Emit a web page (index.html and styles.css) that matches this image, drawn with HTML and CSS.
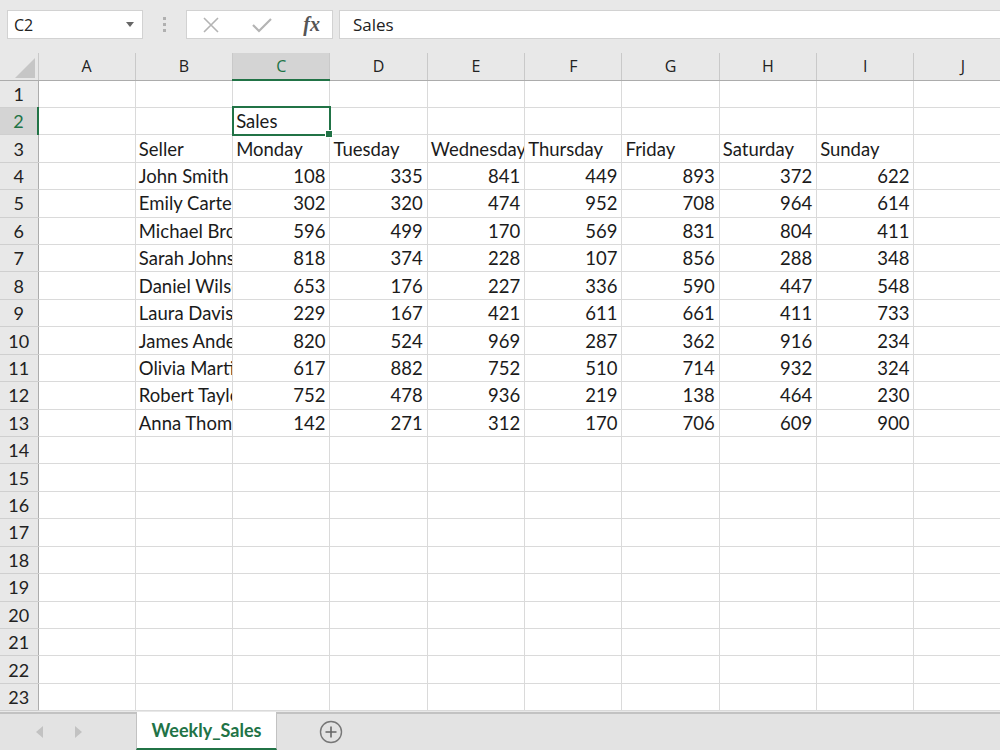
FILE: index.html
```
<!DOCTYPE html>
<html lang="en">
<head>
  <meta charset="UTF-8" />
  <title>Weekly_Sales</title>
  <link rel="stylesheet" href="styles.css">
</head>
<body>
  <div class="toolbar">
    <div class="namebox">
      <span>C2</span>
      <svg class="caret" width="8" height="5" viewBox="0 0 8 5"><path d="M0 0h8L4 5z" fill="#666"/></svg>
    </div>
    <div class="grip"><i></i><i></i><i></i></div>
    <div class="fxbox">
      <svg width="18" height="18" viewBox="0 0 18 18"><path d="M2 2l14 14M16 2L2 16" stroke="#b4b4b4" stroke-width="1.6" fill="none"/></svg>
      <svg width="22" height="18" viewBox="0 0 22 18"><path d="M2 9l6 6L20 3" stroke="#b4b4b4" stroke-width="2.2" fill="none"/></svg>
      <span class="fx">fx</span>
    </div>
    <div class="formula">Sales</div>
  </div>

  <div class="sheet">
    <table class="grid">
      <colgroup>
        <col class="c-row"><col class="c"><col class="c"><col class="c"><col class="c"><col class="c"><col class="c"><col class="c"><col class="c"><col class="c"><col class="c">
      </colgroup>
      <thead>
        <tr>
          <th class="corner"><span class="tri"></span></th>
          <th>A</th><th>B</th><th class="sel">C</th><th>D</th><th>E</th><th>F</th><th>G</th><th>H</th><th>I</th><th>J</th>
        </tr>
      </thead>
      <tbody>
        <tr><th>1</th><td></td><td></td><td></td><td></td><td></td><td></td><td></td><td></td><td></td><td></td></tr>
        <tr><th class="sel">2</th><td></td><td></td><td class="active">Sales</td><td></td><td></td><td></td><td></td><td></td><td></td><td></td></tr>
        <tr><th>3</th><td></td><td>Seller</td><td>Monday</td><td>Tuesday</td><td>Wednesday</td><td>Thursday</td><td>Friday</td><td>Saturday</td><td>Sunday</td><td></td></tr>
        <tr><th>4</th><td></td><td>John Smith</td><td class="n">108</td><td class="n">335</td><td class="n">841</td><td class="n">449</td><td class="n">893</td><td class="n">372</td><td class="n">622</td><td></td></tr>
        <tr><th>5</th><td></td><td>Emily Carter</td><td class="n">302</td><td class="n">320</td><td class="n">474</td><td class="n">952</td><td class="n">708</td><td class="n">964</td><td class="n">614</td><td></td></tr>
        <tr><th>6</th><td></td><td>Michael Brown</td><td class="n">596</td><td class="n">499</td><td class="n">170</td><td class="n">569</td><td class="n">831</td><td class="n">804</td><td class="n">411</td><td></td></tr>
        <tr><th>7</th><td></td><td>Sarah Johnson</td><td class="n">818</td><td class="n">374</td><td class="n">228</td><td class="n">107</td><td class="n">856</td><td class="n">288</td><td class="n">348</td><td></td></tr>
        <tr><th>8</th><td></td><td>Daniel Wilson</td><td class="n">653</td><td class="n">176</td><td class="n">227</td><td class="n">336</td><td class="n">590</td><td class="n">447</td><td class="n">548</td><td></td></tr>
        <tr><th>9</th><td></td><td>Laura Davis</td><td class="n">229</td><td class="n">167</td><td class="n">421</td><td class="n">611</td><td class="n">661</td><td class="n">411</td><td class="n">733</td><td></td></tr>
        <tr><th>10</th><td></td><td>James Anderson</td><td class="n">820</td><td class="n">524</td><td class="n">969</td><td class="n">287</td><td class="n">362</td><td class="n">916</td><td class="n">234</td><td></td></tr>
        <tr><th>11</th><td></td><td>Olivia Martinez</td><td class="n">617</td><td class="n">882</td><td class="n">752</td><td class="n">510</td><td class="n">714</td><td class="n">932</td><td class="n">324</td><td></td></tr>
        <tr><th>12</th><td></td><td>Robert Taylor</td><td class="n">752</td><td class="n">478</td><td class="n">936</td><td class="n">219</td><td class="n">138</td><td class="n">464</td><td class="n">230</td><td></td></tr>
        <tr><th>13</th><td></td><td>Anna Thomas</td><td class="n">142</td><td class="n">271</td><td class="n">312</td><td class="n">170</td><td class="n">706</td><td class="n">609</td><td class="n">900</td><td></td></tr>
        <tr><th>14</th><td></td><td></td><td></td><td></td><td></td><td></td><td></td><td></td><td></td><td></td></tr>
        <tr><th>15</th><td></td><td></td><td></td><td></td><td></td><td></td><td></td><td></td><td></td><td></td></tr>
        <tr><th>16</th><td></td><td></td><td></td><td></td><td></td><td></td><td></td><td></td><td></td><td></td></tr>
        <tr><th>17</th><td></td><td></td><td></td><td></td><td></td><td></td><td></td><td></td><td></td><td></td></tr>
        <tr><th>18</th><td></td><td></td><td></td><td></td><td></td><td></td><td></td><td></td><td></td><td></td></tr>
        <tr><th>19</th><td></td><td></td><td></td><td></td><td></td><td></td><td></td><td></td><td></td><td></td></tr>
        <tr><th>20</th><td></td><td></td><td></td><td></td><td></td><td></td><td></td><td></td><td></td><td></td></tr>
        <tr><th>21</th><td></td><td></td><td></td><td></td><td></td><td></td><td></td><td></td><td></td><td></td></tr>
        <tr><th>22</th><td></td><td></td><td></td><td></td><td></td><td></td><td></td><td></td><td></td><td></td></tr>
        <tr><th>23</th><td></td><td></td><td></td><td></td><td></td><td></td><td></td><td></td><td></td><td></td></tr>
      </tbody>
    </table>
  </div>

  <div class="tabbar">
    <div class="nav">
      <svg width="8" height="12" viewBox="0 0 8 12"><path d="M7 0v12L0 6z" fill="#c2c2c2"/></svg>
      <svg width="8" height="12" viewBox="0 0 8 12"><path d="M1 0v12l7-6z" fill="#c2c2c2"/></svg>
    </div>
    <div class="tab">Weekly_Sales</div>
    <div class="addsheet">
      <svg width="24" height="24" viewBox="0 0 24 24"><circle cx="12" cy="12" r="10.5" stroke="#777" stroke-width="1.4" fill="none"/><path d="M12 6.5v11M6.5 12h11" stroke="#666" stroke-width="1.6"/></svg>
    </div>
  </div>
</body>
</html>
```

FILE: styles.css
```
html, body {
  margin: 0;
  height: 750px;
  overflow: hidden;
}
body {
  display: flex;
  flex-direction: column;
  background-color: #e8e8e8;
  font-family: Lato, 'Liberation Sans', sans-serif;
  color: #1b1b1b;
}

/* formula bar */
.toolbar {
  height: 53px;
  flex: none;
  box-sizing: border-box;
  padding: 10px 0 0 7px;
  display: flex;
  align-items: flex-start;
}
.namebox, .fxbox, .formula {
  height: 29px;
  box-sizing: border-box;
  background: #fff;
  border: 1px solid #d2d2d2;
  display: flex;
  align-items: center;
}
.namebox {
  width: 136px;
  padding: 0 8px 0 6px;
  justify-content: space-between;
  font-family: 'Open Sans', sans-serif;
  font-size: 16px;
  color: #222;
}
.grip {
  width: 43px;
  height: 29px;
  display: flex;
  flex-direction: column;
  align-items: center;
  justify-content: center;
  gap: 3px;
}
.grip i {
  width: 3px;
  height: 3px;
  background: #b0b0b0;
}
.fxbox {
  width: 147px;
  padding: 0 12px 0 15px;
  justify-content: space-between;
}
.fx {
  font-family: 'Liberation Serif', serif;
  font-style: italic;
  font-weight: 700;
  font-size: 20px;
  color: #555;
}
.formula {
  flex: 1;
  margin-left: 6px;
  padding-left: 13px;
  border-right: none;
  font-family: 'Open Sans', sans-serif;
  font-size: 17px;
  color: #222;
}

/* sheet */
.sheet {
  height: 659px;
  flex: none;
  overflow: hidden;
}
.grid {
  table-layout: fixed;
  border-collapse: collapse;
  width: 1011.3px;
  background: #fff;
}
.c-row { width: 38px; }
.c { width: 97.33px; }
.grid thead th {
  height: 26px;
  padding: 0;
  background: #e8e8e8;
  border-left: 1px solid #c9c9c9;
  border-bottom: 1px solid #acacac;
  font-family: 'Open Sans', sans-serif;
  font-weight: 400;
  font-size: 16px;
  color: #222;
}
.grid thead th.corner {
  border-left: none;
  position: relative;
}
.tri {
  position: absolute;
  right: 3px;
  bottom: 2px;
  width: 0;
  height: 0;
  border-left: 20px solid transparent;
  border-bottom: 20px solid #c6c6c6;
}
.grid thead th.sel {
  background: #d4d4d4;
  color: #217346;
  border-bottom: 2px solid #217346;
}
.grid tbody tr {
  height: 27.43px;
}
.grid tbody th {
  padding: 0;
  background: #e8e8e8;
  border-bottom: 1px solid #cfcfcf;
  border-right: 1px solid #acacac;
  font-weight: 400;
  font-size: 18px;
  color: #222;
}
.grid tbody th.sel {
  background: #d4d4d4;
  color: #217346;
  border-right: 2px solid #217346;
}
.grid td {
  padding: 0 0 0 3px;
  border: 1px solid #dadada;
  white-space: nowrap;
  overflow: hidden;
  font-size: 18.5px;
}
.grid td.n {
  padding-right: 4px;
  text-align: right;
}
.grid td.active {
  position: relative;
  overflow: visible;
  outline: 2px solid #217346;
  outline-offset: -1px;
}
.grid td.active::after {
  content: '';
  position: absolute;
  right: -4px;
  bottom: -4px;
  width: 6px;
  height: 6px;
  background: #217346;
  border: 1px solid #fff;
}

/* sheet tabs */
.tabbar {
  flex: 1;
  display: flex;
  align-items: stretch;
  background: #e3e3e3;
  border-top: 2px solid #c2c2c2;
}
.nav {
  width: 136px;
  display: flex;
  align-items: center;
  gap: 30px;
  padding-left: 36px;
  box-sizing: border-box;
}
.tab {
  width: 141px;
  margin-top: -2px;
  box-sizing: border-box;
  background: #fff;
  border-left: 1px solid #c2c2c2;
  border-right: 1px solid #c2c2c2;
  border-bottom: 2px solid #217346;
  display: flex;
  align-items: center;
  justify-content: center;
  font-weight: 700;
  font-size: 18px;
  color: #217346;
}
.addsheet {
  margin-left: 42px;
  display: flex;
  align-items: center;
}
```
